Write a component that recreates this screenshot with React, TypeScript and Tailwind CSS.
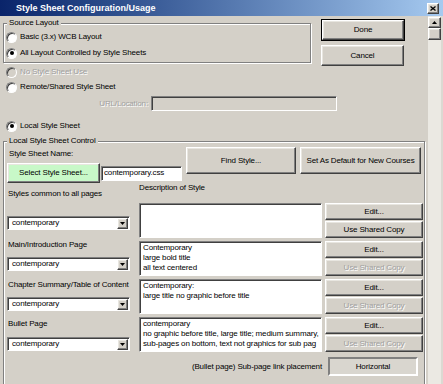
import React from 'react';

const raised =
  'bg-[#d4d0c8] border border-t-white border-l-white border-b-[#404040] border-r-[#404040] shadow-[inset_-1px_-1px_0_#808080,inset_1px_1px_0_#e8e6e0]';
const sunken =
  'border border-t-[#808080] border-l-[#808080] border-b-white border-r-white shadow-[inset_1px_1px_0_#404040]';
const etched = 'border border-[#808080] shadow-[inset_1px_1px_0_#fff,1px_1px_0_#fff]';
const dimText = 'text-[#a0a0a0] [text-shadow:1px_1px_0_#fff]';

interface BtnProps {
  label: string;
  className?: string;
  disabled?: boolean;
}

function Btn({ label, className = '', disabled = false }: BtnProps) {
  return (
    <div className={`${raised} flex items-center justify-center shrink-0 ${className}`}>
      <span className={disabled ? dimText : ''}>{label}</span>
    </div>
  );
}

interface RadioProps {
  label: string;
  checked?: boolean;
  disabled?: boolean;
}

function Radio({ label, checked = false, disabled = false }: RadioProps) {
  return (
    <div className="flex items-center h-[12px] gap-[3px]">
      <span
        className={`w-[11px] h-[11px] rounded-full border border-t-[#808080] border-l-[#808080] border-b-white border-r-white shadow-[inset_1px_1px_0_#404040] flex items-center justify-center ${
          disabled ? 'bg-[#d4d0c8]' : 'bg-white'
        }`}
      >
        {checked && <span className="w-[4px] h-[4px] rounded-full bg-black" />}
      </span>
      <span className={disabled ? dimText : ''}>{label}</span>
    </div>
  );
}

function Combo({ className = '' }: { className?: string }) {
  return (
    <div className={`w-[123px] h-[14px] bg-white ${sunken} flex items-center ${className}`}>
      <span className="flex-1 pl-[4px]">contemporary</span>
      <span className={`w-[11px] h-[11px] mr-[1px] ${raised} flex items-center justify-center`}>
        <svg width="5" height="3" viewBox="0 0 5 3">
          <path d="M0 0h5L2.5 3z" fill="#000" />
        </svg>
      </span>
    </div>
  );
}

interface StyleRow {
  lines: string[];
  shared: boolean;
}

const rows: StyleRow[] = [
  { lines: [], shared: true },
  { lines: ['Contemporary', 'large bold title', 'all text centered'], shared: false },
  { lines: ['Contemporary:', 'large title no graphic before title'], shared: false },
  {
    lines: [
      'contemporary',
      'no graphic before title, large title; medium summary,',
      'sub-pages on bottom, text not graphics for sub pag',
    ],
    shared: false,
  },
];

export default function App() {
  return (
    <div className="w-[443px] h-[384px] overflow-hidden bg-[#d4d0c8] text-black text-[8px] leading-[10px] tracking-[-0.15px] font-['Liberation_Sans',Arial,sans-serif]">
      {/* title bar */}
      <div className="h-[16px] flex items-center bg-linear-to-r from-[#0a246a] to-[#a6caf0] pl-[16px] pr-[4px]">
        <span className="flex-1 text-white font-bold text-[9px] tracking-normal">Style Sheet Configuration/Usage</span>
        <span className={`w-[12px] h-[11px] ${raised} flex items-center justify-center`}>
          <svg width="6" height="5" viewBox="0 0 6 5">
            <path d="M0.5 0.5L5.5 4.5M5.5 0.5L0.5 4.5" stroke="#000" strokeWidth="1.3" />
          </svg>
        </span>
      </div>

      <div className="flex h-[368px]">
        <div className="w-[428px] shrink-0">
          {/* source layout + done/cancel */}
          <div className="flex items-start">
            <fieldset className={`ml-[3px] mt-[2px] w-[308px] h-[45px] min-w-0 ${etched}`}>
              <legend className="ml-[3px] px-[2px] bg-[#d4d0c8]">Source Layout</legend>
              <div className="pl-[2px] pt-[3px] flex flex-col gap-[4px]">
                <Radio label="Basic (3.x) WCB Layout" />
                <Radio checked label="All Layout Controlled by Style Sheets" />
              </div>
            </fieldset>
            <div className="ml-[10px] mt-[3px] flex flex-col gap-[4px]">
              <div className="border border-black">
                <Btn label="Done" className="w-[82px] h-[20px]" />
              </div>
              <Btn label="Cancel" className="w-[83px] h-[21px]" />
            </div>
          </div>

          <div className="pl-[6px] flex flex-col">
            <Radio disabled label="No Style Sheet Use" />
            <div className="mt-[3px]">
              <Radio label="Remote/Shared Style Sheet" />
            </div>
          </div>
          <div className="flex items-center mt-[3px]">
            <span className={`w-[148px] text-right ${dimText}`}>URL/Location:</span>
            <div className={`ml-[3px] w-[186px] h-[15px] bg-[#d4d0c8] ${sunken}`} />
          </div>
          <div className="pl-[6px] mt-[9px]">
            <Radio checked label="Local Style Sheet" />
          </div>

          {/* local style sheet control */}
          <fieldset className={`ml-[3px] mt-[4px] w-[422px] h-[260px] min-w-0 ${etched}`}>
            <legend className="ml-[3px] px-[2px] bg-[#d4d0c8]">Local Style Sheet Control</legend>
            <div className="flex items-start pt-[1px]">
              <div className="ml-[3px] flex flex-col">
                <span className="mt-[2px] pl-[2px]">Style Sheet Name:</span>
                <div className="mt-[4px] flex items-center">
                  <Btn label="Select Style Sheet..." className="w-[93px] h-[20px] !bg-[#c8f8c8]" />
                  <div className={`ml-[1px] w-[81px] h-[15px] bg-white ${sunken} pl-[2px] flex items-center`}>
                    contemporary.css
                  </div>
                </div>
              </div>
              <Btn label="Find Style..." className="ml-[4px] w-[110px] h-[27px]" />
              <Btn label="Set As Default for New Courses" className="ml-[4px] w-[121px] h-[27px]" />
            </div>

            <div className="flex items-start">
              <div className="ml-[3px] w-[132px] flex flex-col items-start">
                <span className="mt-[6px] pl-[1px]">Styles common to all pages</span>
                <Combo className="mt-[17px]" />
                <span className="mt-[10px] pl-[1px]">Main/Introduction Page</span>
                <Combo className="mt-[7px]" />
                <span className="mt-[9px] pl-[1px]">Chapter Summary/Table of Content</span>
                <Combo className="mt-[7px]" />
                <span className="mt-[8px] pl-[1px]">Bullet Page</span>
                <Combo className="mt-[8px]" />
              </div>
              <div className="flex flex-col">
                <span className="h-[10px]">Description of Style</span>
                <div className="mt-[10px] flex flex-col gap-[3px]">
                  {rows.map((row, i) => (
                    <div key={i} className="flex gap-[3px]">
                      <div className={`w-[183px] h-[35px] bg-white ${sunken} pl-[3px] pt-[1px] overflow-hidden whitespace-nowrap`}>
                        {row.lines.map((line) => (
                          <div key={line}>{line}</div>
                        ))}
                      </div>
                      <div className="flex flex-col gap-[1px]">
                        <Btn label="Edit..." className="w-[98px] h-[17px]" />
                        <Btn label="Use Shared Copy" disabled={!row.shared} className="w-[98px] h-[17px]" />
                      </div>
                    </div>
                  ))}
                </div>
              </div>
            </div>

            <div className="mt-[5px] flex items-center justify-end pr-[6px]">
              <span>(Bullet page) Sub-page link placement</span>
              <div className="ml-[6px] w-[90px] h-[19px] bg-[#d9d6cf] border-2 border-t-[#808080] border-l-[#808080] border-b-white border-r-white flex items-center justify-center">
                Horizontal
              </div>
            </div>
          </fieldset>
        </div>

        {/* scrollbar */}
        <div className="w-[15px] bg-[#ebe9e3] border-r-2 border-r-[#dcd9d2] flex flex-col items-start">
          <div className={`mt-[1px] w-[13px] h-[11px] ${raised} flex items-center justify-center`}>
            <svg width="5" height="3" viewBox="0 0 5 3">
              <path d="M0 3h5L2.5 0z" fill="#000" />
            </svg>
          </div>
          <div className={`w-[13px] h-[12px] ${raised}`} />
        </div>
      </div>
    </div>
  );
}
